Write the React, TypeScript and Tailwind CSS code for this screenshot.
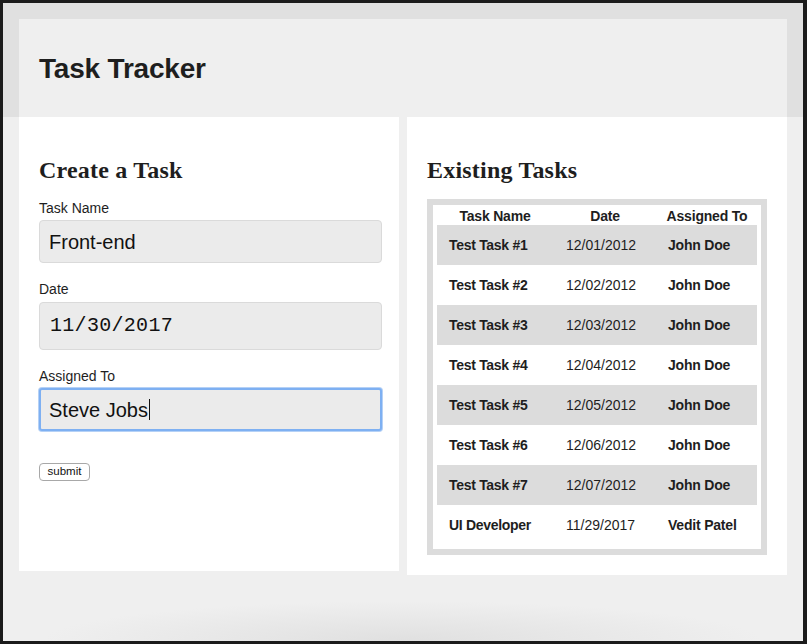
import React from "react";

const rows: [string, string, string][] = [
  ["Test Task #1", "12/01/2012", "John Doe"],
  ["Test Task #2", "12/02/2012", "John Doe"],
  ["Test Task #3", "12/03/2012", "John Doe"],
  ["Test Task #4", "12/04/2012", "John Doe"],
  ["Test Task #5", "12/05/2012", "John Doe"],
  ["Test Task #6", "12/06/2012", "John Doe"],
  ["Test Task #7", "12/07/2012", "John Doe"],
  ["UI Developer", "11/29/2017", "Vedit Patel"],
];

export default function App() {
  return (
    <div className="w-[807px] h-[644px] bg-[#1b1b1b] pt-[3px] pl-[3px] pr-[4px] pb-[3px] font-['Liberation_Sans',Arial,sans-serif] text-[#1e1e1e]">
      <div className="flex flex-col h-full bg-[#efefef]">
        {/* header */}
        <div className="bg-[#e0e0e0] px-4 pt-4">
          <div className="h-[98px] bg-[#efefef] pl-5 pt-[34px]">
            <h1 className="text-[28px] leading-[32px] font-bold tracking-[-0.2px]">Task Tracker</h1>
          </div>
        </div>

        {/* main */}
        <div className="flex items-start gap-2 px-4">
          {/* left */}
          <div className="w-[380px] h-[454px] bg-white pl-5 pt-[39px]">
            <h2 className="font-['Liberation_Serif','Times_New_Roman',serif] text-[24px] leading-[28px] font-bold mb-4 tracking-[0.2px]">
              Create a Task
            </h2>
            <div className="text-[14px] leading-[16px] mb-1">Task Name</div>
            <div className="w-[343px] h-[43px] flex items-center bg-[#ebebeb] border border-[#dadada] rounded-[4px] pl-[9px] text-[20px] text-[#111]">
              Front-end
            </div>
            <div className="text-[14px] leading-[16px] mt-[18px] mb-[5px]">Date</div>
            <div className="w-[343px] h-[48px] flex items-center bg-[#ebebeb] border border-[#dadada] rounded-[4px] pl-[10px] text-[20px] text-[#111] tracking-[0.3px] font-['Liberation_Mono','Courier_New',monospace]">
              11/30/2017
            </div>
            <div className="text-[14px] leading-[16px] mt-[18px] mb-[4px]">Assigned To</div>
            <div className="w-[343px] h-[43px] flex items-center bg-[#ebebeb] border-2 border-[#7eb0f2] shadow-[0_0_0_1px_#b5d1f6] rounded-[3px] pl-[8px] text-[20px] text-[#111]">
              Steve Jobs
              <span className="inline-block w-px h-[21px] bg-[#111] ml-[1px]"></span>
            </div>
            <button className="mt-8 w-[51px] h-[18px] flex items-center justify-center bg-white border border-[#a8a8a8] rounded-[4px] text-[11.5px] leading-none text-[#111]">
              submit
            </button>
          </div>

          {/* right */}
          <div className="w-[380px] bg-white px-5 pt-[39px] pb-5">
            <h2 className="font-['Liberation_Serif','Times_New_Roman',serif] text-[24px] leading-[28px] font-bold mb-[15px] tracking-[0.2px]">
              Existing Tasks
            </h2>
            <div className="border-[6px] border-[#dcdcdc] px-1 pb-1 bg-white">
              <div className="grid grid-cols-[116px_104px_100px] h-[20px] pt-[3px] text-[14px] leading-[17px] font-bold text-center tracking-[-0.2px]">
                <div>Task Name</div>
                <div>Date</div>
                <div>Assigned To</div>
              </div>
              {rows.map((r, i) => (
                <div
                  key={i}
                  className={`grid grid-cols-[116px_104px_100px] h-[40px] items-center text-[14px] leading-[16px] ${
                    i % 2 === 0 ? "bg-[#dcdcdc]" : "bg-white"
                  }`}
                >
                  <div className="pl-[12px] font-bold tracking-[-0.3px]">{r[0]}</div>
                  <div className="pl-[13px]">{r[1]}</div>
                  <div className="pl-[11px] font-bold tracking-[-0.2px]">{r[2]}</div>
                </div>
              ))}
            </div>
          </div>
        </div>

        {/* bottom shadow area */}
        <div className="flex-1 bg-[radial-gradient(ellipse_360px_40px_at_50%_100%,#e0e0e0,#efefef)]"></div>
      </div>
    </div>
  );
}
